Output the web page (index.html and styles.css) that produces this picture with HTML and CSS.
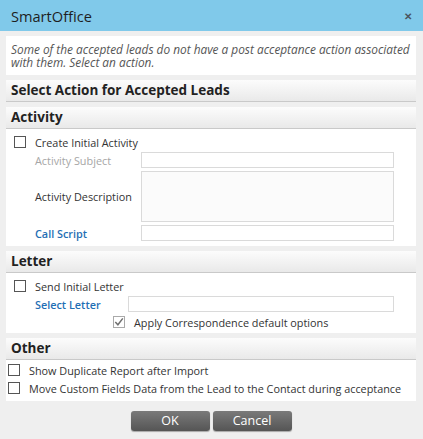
FILE: index.html
```html
<!DOCTYPE html>
<html>
  <head>
    <title>SmartOffice</title>
    <link rel="stylesheet" href="styles.css">
  </head>
  <body>
    <div class="dialog">
      <div class="titlebar">
        <span class="title">SmartOffice</span>
        <span class="close">&#x2715;</span>
      </div>
      <div class="content">
        <div class="intro">Some of the accepted leads do not have a post acceptance action associated with them. Select an action.</div>

        <div class="section">
          <div class="section-head">Select Action for Accepted Leads</div>
        </div>

        <div class="section">
          <div class="section-head">Activity</div>
          <div class="section-body activity">
            <label class="check"><span class="box"></span>Create Initial Activity</label>
            <div class="form activity-form">
              <span class="lbl muted">Activity Subject</span>
              <span class="field"></span>
              <span class="lbl">Activity Description</span>
              <span class="field area"></span>
              <span class="lbl link">Call Script</span>
              <span class="field"></span>
            </div>
          </div>
        </div>

        <div class="section">
          <div class="section-head">Letter</div>
          <div class="section-body letter">
            <label class="check"><span class="box"></span>Send Initial Letter</label>
            <div class="form letter-form">
              <span class="lbl link">Select Letter</span>
              <span class="field"></span>
            </div>
            <label class="check sub"><span class="box checked"><svg width="10" height="10" viewBox="0 0 10 10"><path d="M1.3 5 L3.9 7.8 L8.8 1.4" fill="none" stroke="#707070" stroke-width="1.5"/></svg></span>Apply Correspondence default options</label>
          </div>
        </div>

        <div class="section">
          <div class="section-head">Other</div>
          <div class="section-body other">
            <label class="check"><span class="box"></span>Show Duplicate Report after Import</label>
            <label class="check"><span class="box"></span>Move Custom Fields Data from the Lead to the Contact during acceptance</label>
          </div>
        </div>

        <div class="buttons">
          <span class="btn">OK</span>
          <span class="btn">Cancel</span>
        </div>
      </div>
    </div>
  </body>
</html>
```

FILE: styles.css
```css
html,
body {
  margin: 0;
  height: 100%;
  font-family: "Open Sans", sans-serif;
  font-size: 10.85px;
  color: #333;
  background: #efefef;
}
.titlebar {
  height: 31px;
  background: #80c9ea;
  display: flex;
  align-items: center;
  justify-content: space-between;
  padding: 0 11px 0 11px;
}
.title {
  font-size: 14.6px;
  color: #1e1e1e;
}
.close {
  font-size: 10px;
  font-weight: bold;
  color: #4a5560;
}
.content {
  padding: 5px 7px 0 6px;
}
.intro {
  background: #fff;
  font-style: italic;
  font-size: 11.85px;
  color: #555;
  line-height: 13px;
  padding: 7px 6px 6px 5px;
  margin-bottom: 5px;
}
.section {
  margin-bottom: 5px;
}
.section-head {
  height: 21px;
  line-height: 21px;
  padding-left: 5px;
  font-size: 13.5px;
  font-weight: bold;
  color: #222;
  background: linear-gradient(#fcfcfc, #e9e9e9);
  border-bottom: 1px solid #c9c9c9;
}
.section-body {
  background: #fff;
  padding: 5px 0 5px 8px;
}
.check {
  display: flex;
  align-items: center;
  height: 16px;
}
.box {
  width: 10px;
  height: 10px;
  border: 1px solid #555;
  background: #fff;
  margin-right: 9px;
  display: flex;
  align-items: center;
  justify-content: center;
}
.box.checked {
  border-color: #aaa;
}
.form {
  display: grid;
  row-gap: 3px;
  align-items: center;
  padding-left: 21px;
  margin-top: 2px;
}
.activity-form {
  grid-template-columns: 106px 253px;
}
.letter-form {
  grid-template-columns: 93px 266px;
}
.lbl {
  color: #333;
}
.lbl.muted {
  color: #a6a6a6;
}
.lbl.link {
  color: #1f6fb5;
  font-weight: 600;
}
.field {
  height: 14px;
  border: 1px solid #dadada;
  background: #fff;
}
.field.area {
  height: 49px;
  background: #fbfbfb;
}
.check.sub {
  padding-left: 99px;
  margin-top: 2px;
}
.letter {
  padding-bottom: 3px;
}
.other {
  padding: 1px 0 4px 2px;
}
.other .check {
  height: 18px;
}
.buttons {
  display: flex;
  justify-content: center;
  gap: 3px;
  padding-top: 5px;
}
.btn {
  width: 79px;
  height: 20px;
  line-height: 20px;
  text-align: center;
  color: #fff;
  font-size: 12.5px;
  border-radius: 3px;
  background: linear-gradient(#7a7a7a, #555);
  box-shadow: 0 1px 1px rgba(0,0,0,.3);
}
```
